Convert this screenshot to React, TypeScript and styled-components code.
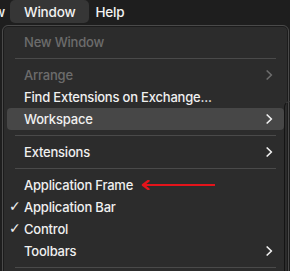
import React from "react";
import styled, { createGlobalStyle } from "styled-components";

type Item =
  | { kind: "sep" }
  | {
      kind: "item";
      label: string;
      disabled?: boolean;
      active?: boolean;
      checked?: boolean;
      submenu?: boolean;
      marked?: boolean;
    };

const items: Item[] = [
  { kind: "item", label: "New Window", disabled: true },
  { kind: "sep" },
  { kind: "item", label: "Arrange", disabled: true, submenu: true },
  { kind: "item", label: "Find Extensions on Exchange..." },
  { kind: "item", label: "Workspace", active: true, submenu: true },
  { kind: "sep" },
  { kind: "item", label: "Extensions", submenu: true },
  { kind: "sep" },
  { kind: "item", label: "Application Frame", marked: true },
  { kind: "item", label: "Application Bar", checked: true },
  { kind: "item", label: "Control", checked: true },
  { kind: "item", label: "Toolbars", submenu: true },
  { kind: "sep" },
];

export default function App() {
  return (
    <>
      <GlobalStyle />
      <Screen>
        <MenuBar>
          <BarItem $cut>View</BarItem>
          <BarItem $open>Window</BarItem>
          <BarItem>Help</BarItem>
        </MenuBar>
        <MenuPanel>
          {items.map((it, i) =>
            it.kind === "sep" ? (
              <Separator key={i} />
            ) : (
              <Row key={i} $disabled={it.disabled} $active={it.active}>
                {it.checked && <Check>✓</Check>}
                <Label>{it.label}</Label>
                {it.marked && <RedArrow />}
                {it.submenu && <Chevron />}
              </Row>
            )
          )}
        </MenuPanel>
        <BackEdge />
      </Screen>
    </>
  );
}

function Chevron() {
  return (
    <ChevronSvg viewBox="0 0 7 10" width="7" height="10">
      <path
        d="M1.2 1 L5.4 5 L1.2 9"
        fill="none"
        stroke="currentColor"
        strokeWidth="1.7"
        strokeLinecap="round"
        strokeLinejoin="round"
      />
    </ChevronSvg>
  );
}

function RedArrow() {
  return (
    <ArrowSvg viewBox="0 0 76 10" width="76" height="10">
      <line x1="3" y1="5" x2="74" y2="5" stroke="#e4141b" strokeWidth="2.2" />
      <path
        d="M7.5 0.8 L2 5 L7.5 9.2"
        fill="none"
        stroke="#e4141b"
        strokeWidth="2.4"
        strokeLinecap="round"
        strokeLinejoin="round"
      />
    </ArrowSvg>
  );
}

const GlobalStyle = createGlobalStyle`
  html, body {
    margin: 0;
    padding: 0;
    background: #1e1e1e;
    overflow: hidden;
  }
`;

const Screen = styled.div`
  position: relative;
  width: 290px;
  height: 271px;
  overflow: hidden;
  background: #1e1e1e;
  font-family: Inter, "Liberation Sans", sans-serif;
  font-size: 13px;
  font-weight: 500;
  letter-spacing: -0.2px;
  -webkit-font-smoothing: antialiased;
`;

const MenuBar = styled.div`
  display: flex;
  align-items: stretch;
  height: 24px;
  margin-left: -31px;
  color: #f2f2f2;
`;

const BarItem = styled.div<{ $open?: boolean; $cut?: boolean }>`
  display: flex;
  align-items: center;
  height: 23px;
  padding: 0 ${(p) => (p.$open ? "14px" : p.$cut ? "5px" : "6px")};
  border-radius: 5px;
  font-size: 13.5px;
  background: ${(p) => (p.$open ? "#363636" : "transparent")};
`;

const MenuPanel = styled.div`
  display: flex;
  flex-direction: column;
  margin: 1px 0 0 2px;
  width: 287px;
  box-sizing: border-box;
  padding: 5px 4px;
  background: #2c2c2c;
  border: 1px solid #4a4a4a;
  border-radius: 6px;
  box-shadow: inset 0 0 0 1px #1c1c1c;
`;

const Row = styled.div<{ $disabled?: boolean; $active?: boolean }>`
  position: relative;
  display: flex;
  align-items: center;
  height: 22px;
  padding: 0 11px 0 17px;
  border-radius: 4px;
  color: ${(p) => (p.$disabled ? "#6c6c6c" : "#f0f0f0")};
  background: ${(p) => (p.$active ? "#474747" : "transparent")};
`;

const Check = styled.span`
  position: absolute;
  left: 2px;
  top: 2px;
  font-size: 14px;
  font-weight: 400;
  font-family: "DejaVu Sans", sans-serif;
`;

const Label = styled.span`
  flex: 1;
  white-space: nowrap;
`;

const ChevronSvg = styled.svg`
  flex: none;
`;

const ArrowSvg = styled.svg`
  position: absolute;
  left: 134px;
  top: 6px;
`;

const Separator = styled.div`
  height: 1px;
  margin: 5px 8px;
  background: #4a4a4a;
`;

const BackEdge = styled.div`
  position: absolute;
  left: 284px;
  top: 101px;
  width: 10px;
  bottom: 0;
  border-left: 1px solid #141414;
  border-top: 1px solid #3a3a3a;
  border-top-left-radius: 6px;
`;
